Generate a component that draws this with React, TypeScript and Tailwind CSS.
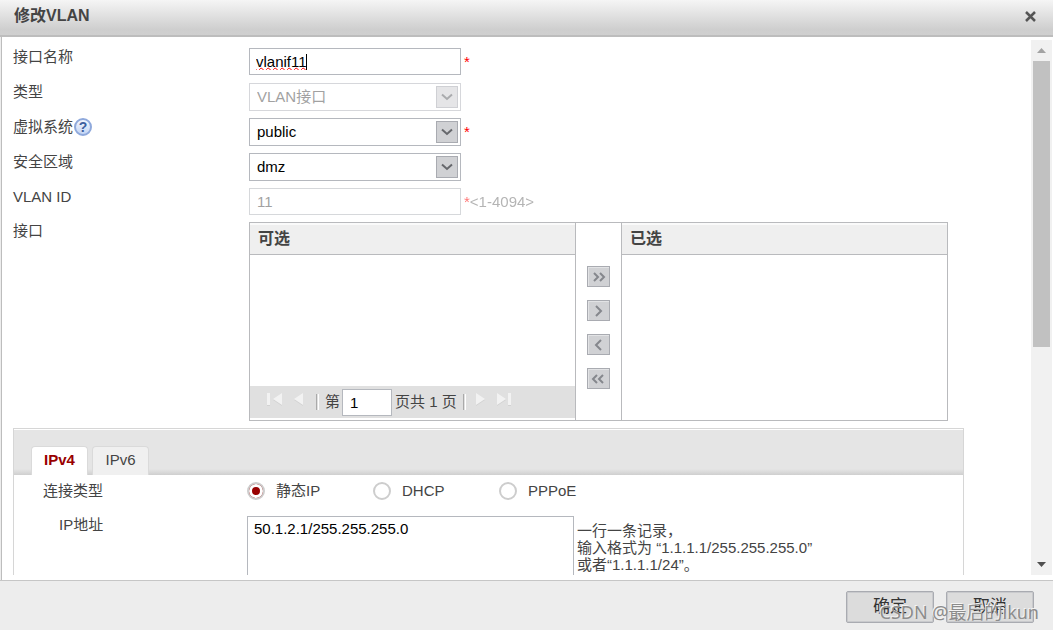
import React, { useState } from 'react';
import clsx from 'clsx';

const connectionTypes = [
  { id: 'static', label: '静态IP' },
  { id: 'dhcp', label: 'DHCP' },
  { id: 'pppoe', label: 'PPPoE' }
];

const moveActions = [
  { id: 'add-all', label: '全部添加', path: 'M7 6l4 4-4 4M13 6l4 4-4 4' },
  { id: 'add', label: '添加', path: 'M9 5l5 5-5 5' },
  { id: 'remove', label: '移除', path: 'M14 5l-5 5 5 5' },
  { id: 'remove-all', label: '全部移除', path: 'M10 6l-4 4 4 4M16 6l-4 4 4 4' }
];

function Required() {
  return <span className="text-[#ff0000]">*</span>;
}

type SelectProps = {
  id: string;
  value: string;
  disabled?: boolean;
};

function Select({ id, value, disabled }: SelectProps) {
  return (
    <div className={clsx('relative w-[212px]', disabled && 'opacity-55')}>
      <select
        id={id}
        defaultValue={value}
        disabled={disabled}
        className={clsx(
          'block h-7 w-full appearance-none border border-[#b5b8be] bg-white pl-[7px] pr-7',
          disabled ? 'text-[#555]' : 'text-black'
        )}>
        <option>{value}</option>
      </select>
      <span className="pointer-events-none absolute right-[3px] top-[3px] flex h-[22px] w-[22px] items-center justify-center border border-[#a9abb1] bg-[#d0d1d4]">
        <svg width="12" height="8" viewBox="0 0 12 8" fill="none" stroke="#66686c" strokeWidth="2">
          <path d="M1 1.5l5 4.5 5-4.5" />
        </svg>
      </span>
    </div>
  );
}

function PagerIcon({ path, label }: { path: string; label: string }) {
  return (
    <button type="button" aria-label={label} className="pb-1 text-[#f2f2f2]">
      <svg width="18" height="16" viewBox="0 0 18 16" fill="currentColor">
        <path d={path} fill="#d2d2d2" transform="translate(0 1)" />
        <path d={path} />
      </svg>
    </button>
  );
}

function PagerSeparator() {
  return <span className="h-4 w-[3px] border-l border-r border-l-[#aaa] border-r-white" />;
}

function Transfer() {
  return (
    <div className="flex h-[199px] w-[699px] border border-[#b9babd]">
      <div className="flex flex-1 flex-col border-r border-[#b9babd] pb-[2px]">
        <div className="h-8 border-b border-[#b9babd] border-t-2 border-t-[#fafafa] bg-[#efefef] pl-2 text-base leading-[27px] font-bold">
          可选
        </div>
        <div className="flex-1" />
        <div className="flex h-8 items-center bg-[#e0e0e0] pl-4">
          <PagerIcon label="首页" path="M1 1h3v12H1zM16 1v12L7 7z" />
          <div className="w-2" />
          <PagerIcon label="上一页" path="M11 1v12L2 7z" />
          <div className="w-[6px]" />
          <PagerSeparator />
          <label htmlFor="page" className="mr-[2px] ml-[6px]">第</label>
          <input
            id="page"
            defaultValue="1"
            className="mr-[3px] h-[27px] w-[50px] border border-[#b5b8be] bg-white pl-[7px] text-black" />
          <span>页共 1 页</span>
          <div className="w-[6px]" />
          <PagerSeparator />
          <div className="w-2" />
          <PagerIcon label="下一页" path="M2 1v12l9-6z" />
          <div className="w-1" />
          <PagerIcon label="末页" path="M1 1v12l9-6zM12 1h3v12h-3z" />
        </div>
      </div>
      <div className="flex w-[45px] flex-col items-center gap-[13px] pt-[43px]">
        {moveActions.map((action) => (
          <button
            key={action.id}
            type="button"
            aria-label={action.label}
            className="flex h-[21px] w-[23px] items-center justify-center border border-[#a9abb1] bg-[#d0d1d4] shadow-[inset_1px_1px_0_#e2e3e5]">
            <svg width="23" height="20" viewBox="0 0 23 20" className="shrink-0" fill="none" stroke="#85878d" strokeWidth="2">
              <path d={action.path} />
            </svg>
          </button>
        ))}
      </div>
      <div className="flex-1 border-l border-[#b9babd]">
        <div className="h-8 border-b border-[#b9babd] border-t-2 border-t-[#fafafa] bg-[#efefef] pl-2 text-base leading-[27px] font-bold">
          已选
        </div>
      </div>
    </div>
  );
}

function AddressTabs() {
  const [activeTab, setActiveTab] = useState('IPv4');
  return (
    <section className="mt-[7px] mr-[67px] h-[400px] border border-[#d6d6d6]">
      <div
        role="tablist"
        className="flex h-[46px] items-end gap-1 border-t border-white bg-[linear-gradient(to_top,#cfcfcf,#e5e5e5_6px)] pl-[17px]">
        {['IPv4', 'IPv6'].map((tab) => (
          <button
            key={tab}
            type="button"
            role="tab"
            aria-selected={activeTab === tab}
            onClick={() => setActiveTab(tab)}
            className={clsx(
              'h-[29px] w-[57px] rounded-t border border-b-0 border-[#dadada] pb-[2px]',
              activeTab === tab ? 'bg-white font-bold text-[#990000]' : 'bg-[#f0f0f0]'
            )}>
            {tab}
          </button>
        ))}
      </div>
      <div className="grid grid-cols-[204px_1fr] gap-y-[15px] pt-[6px] pl-[29px]">
        <span className="leading-5">连接类型</span>
        <div className="flex h-5 items-center">
          {connectionTypes.map((type) => (
            <label key={type.id} className="flex w-[126px] items-center gap-[11px]">
              <input
                type="radio"
                name="connection"
                defaultChecked={type.id === 'static'}
                className="size-[18px] shrink-0 appearance-none rounded-full border-2 border-[#cdcdcd] bg-white checked:bg-[#990000] checked:shadow-[inset_0_0_0_3px_white]" />
              {type.label}
            </label>
          ))}
        </div>
        <label htmlFor="ip" className="pl-4 leading-[18px]">IP地址</label>
        <div className="flex items-start gap-[3px]">
          <textarea
            id="ip"
            defaultValue="50.1.2.1/255.255.255.0"
            className="h-[100px] w-[327px] resize-none border border-[#b5b8be] bg-white px-[6px] py-[3px] leading-[18px] text-black" />
          <p className="pt-[6px] leading-[17px]">
            一行一条记录，<br />
            输入格式为 “1.1.1.1/255.255.255.0”<br />
            或者“1.1.1.1/24”。
          </p>
        </div>
      </div>
    </section>
  );
}

function Scrollbar() {
  return (
    <div className="flex w-[21px] shrink-0 flex-col items-center bg-[#f1f1f1]">
      <div className="flex h-[21px] items-center">
        <svg width="9" height="5" viewBox="0 0 9 5" fill="#a3a3a3">
          <path d="M4.500 0L9 5H0z" />
        </svg>
      </div>
      <div className="flex w-[17px] flex-1 flex-col">
        <div className="h-[58%] bg-[#c1c1c1]" />
      </div>
      <div className="flex h-[21px] items-center">
        <svg width="9" height="5" viewBox="0 0 9 5" fill="#505050">
          <path d="M4.500 5L9 0H0z" />
        </svg>
      </div>
    </div>
  );
}

export default function App() {
  return (
    <div className="relative flex h-screen flex-col overflow-hidden bg-[#ededed] font-['Liberation_Sans','Noto_Sans_CJK_SC',sans-serif] text-[15px] text-[#444]">
      <header className="flex h-[37px] shrink-0 items-center justify-between border-b-2 border-[#bdbdbd] bg-[linear-gradient(#f5f5f5,#cecece_85%,#d0d0d0)] pr-[17px] pb-[3px] pl-[14px]">
        <h1 className="text-base leading-6 font-bold">修改VLAN</h1>
        <button type="button" aria-label="关闭">
          <svg width="11" height="11" viewBox="0 0 11 11" stroke="#555" strokeWidth="2.500">
            <path d="M1 1l9 9M10 1l-9 9" />
          </svg>
        </button>
      </header>

      <main className="ml-px flex min-h-0 flex-1 border-l border-[#bdbdbd] bg-white pt-[3px] pr-px pb-[5px]">
        <div className="min-w-0 flex-1 overflow-hidden pt-2 pl-[11px]">
          <div className="grid grid-cols-[236px_1fr] items-start gap-y-[7px] leading-[18px]">
            <label htmlFor="name">接口名称</label>
            <div className="flex gap-[3px]">
              <div className="relative">
                <input
                  id="name"
                  defaultValue="vlanif11"
                  className="block h-[27px] w-[212px] border border-[#b5b8be] bg-white px-[6px] leading-6 text-black underline decoration-[#ff0000] decoration-wavy decoration-1 underline-offset-0 [text-decoration-skip-ink:none]" />
                <span className="absolute top-[6px] left-[57px] h-4 w-px bg-black" />
              </div>
              <span className="leading-7"><Required /></span>
            </div>

            <label htmlFor="type">类型</label>
            <Select id="type" value="VLAN接口" disabled />

            <div className="flex h-[18px] items-center gap-px">
              <label htmlFor="vsys">虚拟系统</label>
              <button
                type="button"
                aria-label="帮助"
                className="flex size-[18px] items-center justify-center rounded-full border-2 border-[#8fa9dc] bg-[linear-gradient(#f4f7fd,#c3d5f4)] text-[14px] leading-none font-bold text-[#3d5f9f]">
                ?
              </button>
            </div>
            <div className="flex gap-[3px]">
              <Select id="vsys" value="public" />
              <span className="leading-7"><Required /></span>
            </div>

            <label htmlFor="zone">安全区域</label>
            <Select id="zone" value="dmz" />

            <label htmlFor="vlan">VLAN ID</label>
            <div className="flex gap-[3px] opacity-55">
              <input
                id="vlan"
                defaultValue="11"
                disabled
                className="block h-[27px] w-[212px] border border-[#b5b8be] bg-white px-[7px] text-[#555]" />
              <span className="leading-[27px] text-[#777]"><Required />&lt;1-4094&gt;</span>
            </div>

            <span>接口</span>
            <Transfer />
          </div>

          <AddressTabs />
        </div>
        <Scrollbar />
      </main>

      <footer className="flex h-[50px] shrink-0 items-center justify-end gap-3 border-t border-[#c6c6c6] pt-[3px] pr-[19px]">
        <button type="button" className="h-8 w-[88px] rounded-xs border border-[#a9abb1] bg-[#dcdcdc] text-[17px] text-[#333] shadow-[inset_0_0_0_1px_#c9cacd]">
          确定
        </button>
        <button type="button" className="h-8 w-[88px] rounded-xs border border-[#a9abb1] bg-[#dcdcdc] text-[17px] text-[#333] shadow-[inset_0_0_0_1px_#c9cacd]">
          取消
        </button>
      </footer>

      <span className="pointer-events-none absolute right-[14px] bottom-[6px] font-['Noto_Sans','Noto_Sans_CJK_SC',sans-serif] text-[18px] leading-6 text-[#8c8c8c] [text-shadow:-1px_-1px_0_#f4f4f4]">
        CSDN @最后的ikun
      </span>
    </div>
  );
}
